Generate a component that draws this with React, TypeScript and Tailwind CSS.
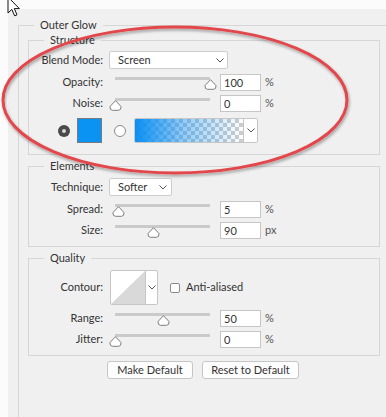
import React from 'react';

const Chevron = ({ className = '' }: { className?: string }) => (
  <svg width="8" height="5" viewBox="0 0 8 5" className={className}>
    <path d="M0.5 0.5 L4 4 L7.5 0.5" fill="none" stroke="#555" strokeWidth="1" />
  </svg>
);

const Thumb = () => (
  <svg width="13" height="11" viewBox="0 0 13 11">
    <path
      d="M6.5 0.7 L12 6.5 Q12.3 10.3 9.5 10.3 L3.5 10.3 Q0.7 10.3 1 6.5 Z"
      fill="#fff"
      stroke="#7d7d7d"
      strokeWidth="1"
    />
  </svg>
);

interface SliderRowProps {
  label: string;
  value: string;
  unit: string;
  pos: number; // 0..1
  className?: string;
}

const SliderRow: React.FC<SliderRowProps> = ({ label, value, unit, pos, className = '' }) => (
  <div className={`flex items-center h-[17px] ${className}`}>
    <div className="w-[74px] text-right">{label}</div>
    <div className="relative ml-[6px] w-[107px] h-[17px]">
      <div className="absolute top-[3px] left-[6px] right-[6px] h-[3px] bg-[#cacaca]" />
      <div className="absolute top-[5px]" style={{ left: `${pos * 95}px` }}>
        <Thumb />
      </div>
    </div>
    <div className="ml-[4px] w-[41px] h-[17px] bg-white border border-[#c6c6c6] pl-[3px] leading-[15px]">
      {value}
    </div>
    <div className="ml-[4px] text-[#555]">{unit}</div>
  </div>
);

const Group: React.FC<{ title: string; className?: string; children: React.ReactNode }> = ({
  title,
  className = '',
  children,
}) => (
  <fieldset className={`w-[352px] border border-[#d6d6d6] ${className}`}>
    <legend className="ml-[15px] px-[6px] leading-[14px]">{title}</legend>
    {children}
  </fieldset>
);

export default function App() {
  return (
    <div className="relative w-[386px] h-[417px] overflow-hidden bg-[#fbfbfb] font-['Lato','Open_Sans',sans-serif] text-[11px] text-[#333]">
      <div className="ml-[8px] mt-[9px] h-[408px] bg-[#f0f0f0] pt-[9px] pl-[10px]">
        <fieldset className="w-[420px] h-[400px] border-l border-t border-[#d6d6d6]">
          <legend className="ml-[15px] px-[6px] leading-[14px]">Outer Glow</legend>

          {/* Structure */}
          <Group title="Structure" className="ml-[9px] mt-[1px] pb-[11px]">
            <div className="flex items-center mt-[4px] h-[18px]">
              <div className="w-[74px] text-right">Blend Mode:</div>
              <div className="ml-[6px] w-[119px] h-[18px] bg-white border border-[#cdcdcd] rounded-[2px] flex items-center pl-[8px] pr-[3px]">
                <span className="flex-1">Screen</span>
                <Chevron />
              </div>
            </div>
            <SliderRow label="Opacity:" value="100" unit="%" pos={1} className="mt-[5px]" />
            <SliderRow label="Noise:" value="0" unit="%" pos={0} className="mt-[4px]" />
            <div className="flex items-center mt-[6px] h-[25px]">
              <div className="ml-[29px] w-[12px] h-[12px] rounded-full bg-[#4a4a4a] flex items-center justify-center">
                <div className="w-[4px] h-[4px] rounded-full bg-[#d8d8d8]" />
              </div>
              <div className="ml-[7px] w-[25px] h-[25px] bg-[#0a93f3] border border-[#7a7a7a]" />
              <div className="ml-[12px] w-[12px] h-[12px] rounded-full bg-white border border-[#8a8a8a]" />
              <div className="ml-[8px] flex h-[25px] border border-[#c6c6c6] rounded-[2px] overflow-hidden">
                <div className="w-[108px] h-full bg-[linear-gradient(to_right,#0a8ff3,rgba(10,143,243,0.45)_45%,rgba(10,143,243,0)),repeating-conic-gradient(#cdcdcd_0_25%,#ffffff_0_50%)] [background-size:100%_100%,8px_8px]" />
                <div className="w-[14px] h-full bg-white border-l border-[#c6c6c6] flex items-center justify-center">
                  <Chevron />
                </div>
              </div>
            </div>
          </Group>

          {/* Elements */}
          <Group title="Elements" className="ml-[9px] mt-[4px] pb-[7px]">
            <div className="flex items-center mt-[5px] h-[18px]">
              <div className="w-[74px] text-right">Technique:</div>
              <div className="ml-[6px] w-[63px] h-[18px] bg-white border border-[#cdcdcd] rounded-[2px] flex items-center pl-[8px] pr-[4px]">
                <span className="flex-1">Softer</span>
                <Chevron />
              </div>
            </div>
            <SliderRow label="Spread:" value="5" unit="%" pos={0.03} className="mt-[5px]" />
            <SliderRow label="Size:" value="90" unit="px" pos={0.4} className="mt-[4px]" />
          </Group>

          {/* Quality */}
          <Group title="Quality" className="ml-[9px] mt-[4px] pb-[7px]">
            <div className="flex items-center mt-[5px] h-[35px]">
              <div className="w-[74px] text-right">Contour:</div>
              <div className="ml-[7px] flex h-[35px] border border-[#c6c6c6] rounded-[2px] overflow-hidden bg-white">
                <svg width="34" height="33" viewBox="0 0 34 33">
                  <polygon points="0,33 34,0 34,33" fill="#d9d9d9" />
                </svg>
                <div className="w-[12px] h-full border-l border-[#c6c6c6] flex items-center justify-center">
                  <Chevron />
                </div>
              </div>
              <div className="ml-[12px] w-[10px] h-[10px] bg-white border border-[#8a8a8a] rounded-[2px]" />
              <span className="ml-[6px]">Anti-aliased</span>
            </div>
            <SliderRow label="Range:" value="50" unit="%" pos={0.5} className="mt-[5px]" />
            <SliderRow label="Jitter:" value="0" unit="%" pos={0} className="mt-[4px]" />
          </Group>

          <div className="flex mt-[5px] ml-[88px] gap-[9px]">
            <button className="w-[86px] h-[18px] bg-[#fdfdfd] border border-[#c6c6c6] rounded-[3px] leading-[16px]">
              Make Default
            </button>
            <button className="w-[97px] h-[18px] bg-[#fdfdfd] border border-[#c6c6c6] rounded-[3px] leading-[16px]">
              Reset to Default
            </button>
          </div>
        </fieldset>
      </div>

      {/* red annotation ellipse */}
      <svg className="absolute inset-0 pointer-events-none" width="386" height="417">
        <defs>
          <filter id="sh" x="-10%" y="-10%" width="120%" height="130%">
            <feDropShadow dx="1" dy="2" stdDeviation="1.5" floodColor="#000" floodOpacity="0.35" />
          </filter>
        </defs>
        <ellipse
          cx="175"
          cy="100"
          rx="172"
          ry="73"
          fill="none"
          stroke="#e2474b"
          strokeWidth="3"
          filter="url(#sh)"
        />
      </svg>

      {/* mouse cursor */}
      <svg className="absolute left-[7px] top-[-4px]" width="14" height="22" viewBox="0 0 14 22">
        <path
          d="M1 1 L1 17 L4.8 13.4 L7.6 19.8 L10 18.8 L7.3 12.6 L12.4 12.6 Z"
          fill="#fff"
          stroke="#111"
          strokeWidth="1"
          strokeLinejoin="round"
        />
      </svg>
    </div>
  );
}
